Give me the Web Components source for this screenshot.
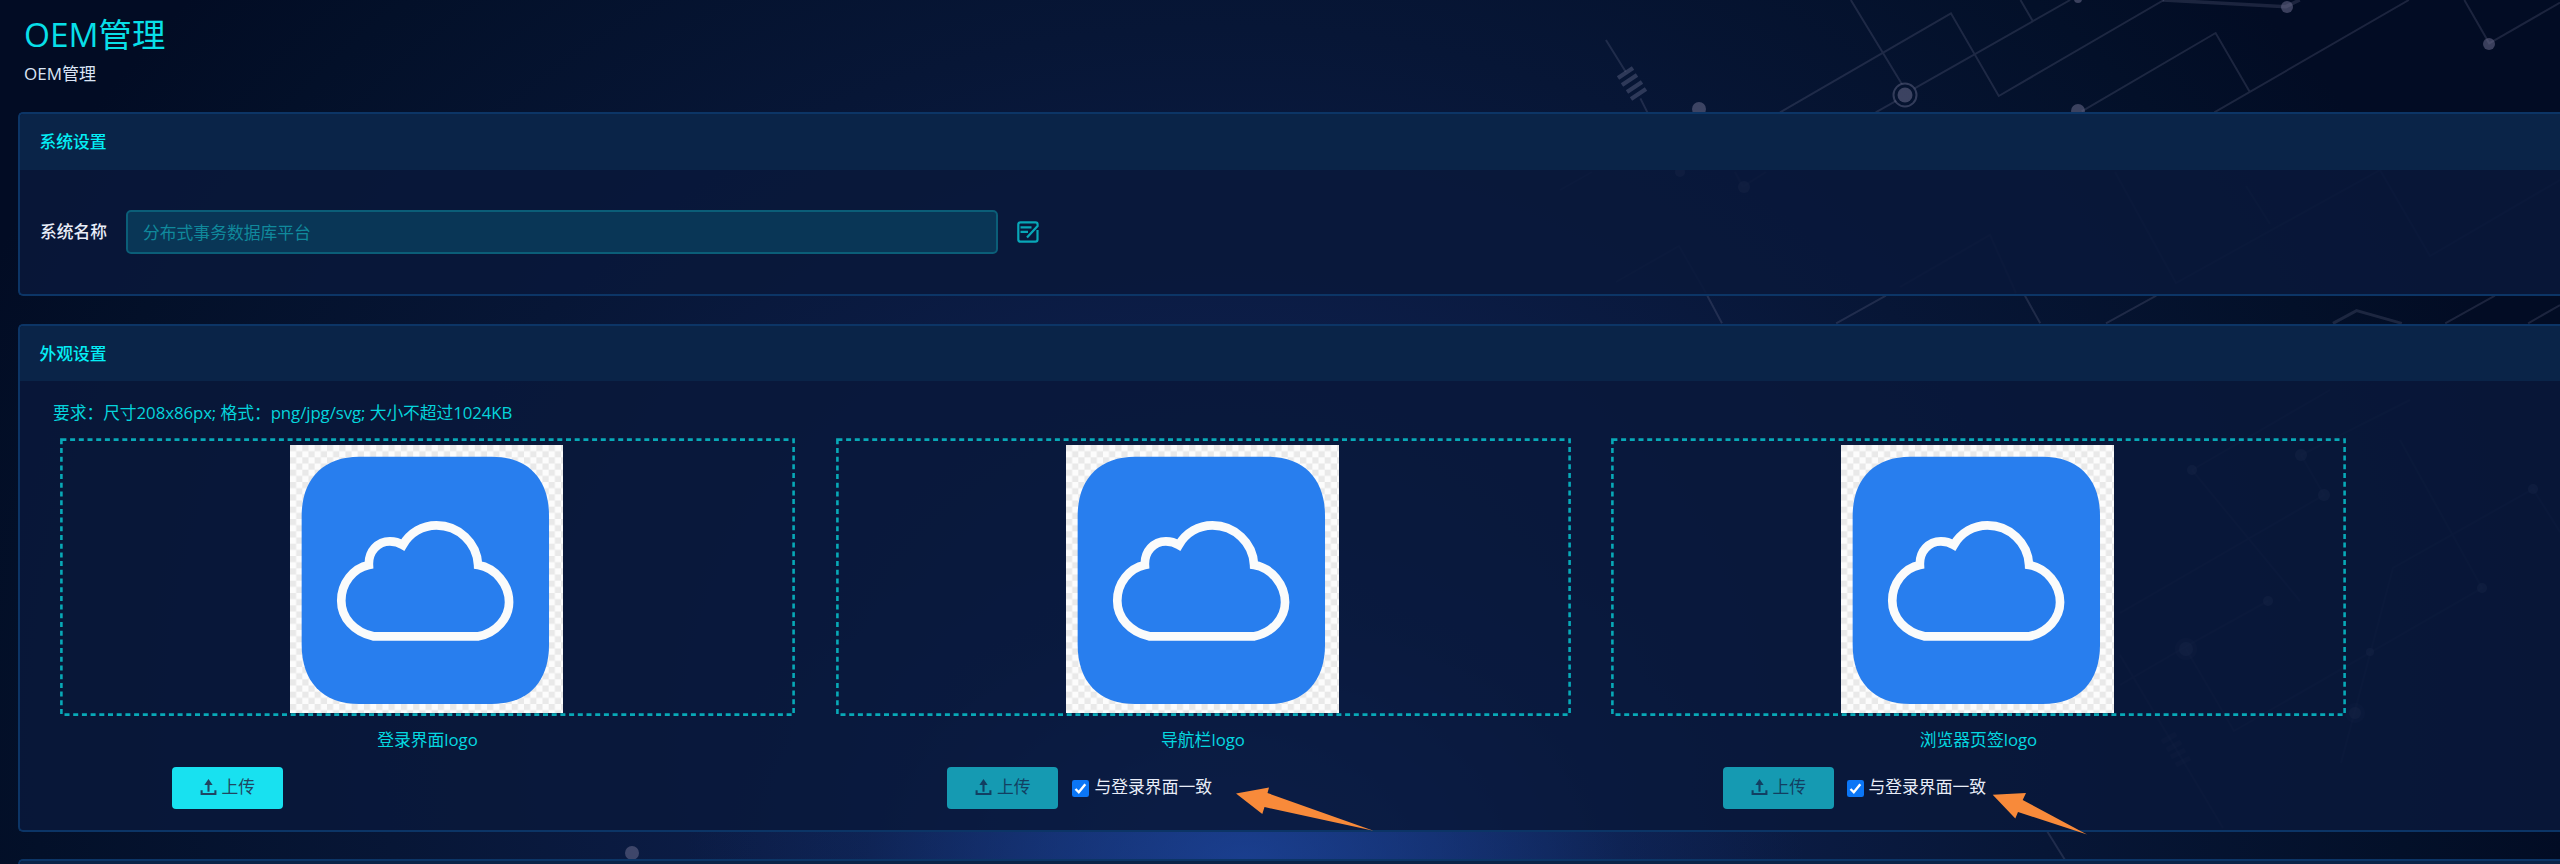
<!DOCTYPE html>
<html lang="zh-CN">
<head>
<meta charset="utf-8">
<title>OEM管理</title>
<style>
html,body{margin:0;height:100%;overflow:hidden;background:#020b22}
body{font-family:"Open Sans","Noto Sans CJK SC",sans-serif;font-size:16.8px;line-height:24px;color:#e8edf8}
</style>
</head>
<body>
<oem-page>
  <page-heading><span slot="title">OEM管理</span><span slot="crumb">OEM管理</span></page-heading>
  <settings-panel style="height:184px">
    <span slot="title">系统设置</span>
    <name-field label="系统名称" value="分布式事务数据库平台"></name-field>
  </settings-panel>
  <settings-panel style="height:508px">
    <span slot="title">外观设置</span>
    <logo-section>
      <span slot="hint">要求：尺寸208x86px; 格式：png/jpg/svg; 大小不超过1024KB</span>
      <logo-card>登录界面logo<upload-button slot="action">上传</upload-button></logo-card>
      <logo-card>导航栏logo<upload-button slot="action" disabled>上传</upload-button><check-option slot="action">与登录界面一致</check-option></logo-card>
      <logo-card>浏览器页签logo<upload-button slot="action" disabled>上传</upload-button><check-option slot="action" style="--gap:4.5px">与登录界面一致</check-option></logo-card>
    </logo-section>
  </settings-panel>
  <settings-panel style="height:184px"></settings-panel>
</oem-page>
<pointer-arrows></pointer-arrows>
<script>
const define = (name, html) => customElements.define(name, class extends HTMLElement {
  constructor() {
    super();
    const root = this.attachShadow({mode: 'open'});
    const t = document.createElement('template');
    t.innerHTML = html;
    root.append(t.content.cloneNode(true));
    root.querySelectorAll('[data-attr]').forEach(e => {
      const v = this.getAttribute(e.dataset.attr);
      if (e.tagName === 'INPUT') e.value = v; else e.textContent = v;
    });
  }
});

define('circuit-backdrop', `
<style>
:host{position:absolute;inset:0;z-index:0;background:
 radial-gradient(ellipse 560px 360px at 1245px 864px,rgba(32,76,172,.66) 0%,rgba(29,70,160,.46) 35%,rgba(22,56,130,.18) 68%,transparent 100%),
 radial-gradient(ellipse 1350px 1150px at 1220px 740px,#10275a 0%,#0c1d47 35%,#071636 62%,#031029 88%,#020c24 100%)}
svg{display:block;width:2560px;height:864px}
.l{fill:none;stroke:#8d8fae;stroke-opacity:.19;stroke-width:2}
.l *{vector-effect:non-scaling-stroke}
.d{fill:#6f7090;fill-opacity:.52}
.f{fill:#8d8fae;fill-opacity:.5}
</style>
<svg viewBox="0 0 2560 864">
 <g class="l" transform="translate(1560 0) scale(.63776 .33333)">
  <path d="M72 120L103 215M126 295L137 337"/>
  <path d="M456 0L536 252M345 337L613 40L688 288L947 0M556 265L800 0M495 337L527 303M722 0L741 62"/>
  <path d="M818 334L1028 99L1081 274M1026 337L1331 0M1418 0L1457 130L1568 8"/>
  <path style="stroke-width:3.5" d="M945 0L1138 20L1160 0"/>
  <path d="M231 887L254 970M511 887L433 970M729 887L753 970M935 887L856 970M1466 887L1388 970M1568 915L1518 970"/>
  <path style="stroke-width:3" d="M1212 970L1249 932L1320 970"/>
 </g>
 <path d="M58 78L73 68M62 85L77 75M67 92L82 82M71 99L86 89" transform="translate(1560 0)" fill="none" stroke="#8083a3" stroke-opacity=".33" stroke-width="4.2"/>
 <g class="d"><circle cx="1699" cy="109" r="7"/><circle cx="2078" cy="111" r="7"/><circle cx="2287" cy="7" r="6"/><circle cx="2489" cy="44" r="6"/><circle cx="2078" cy="-1" r="4"/><circle cx="1905" cy="95" r="7.5"/><circle cx="632" cy="853" r="7"/></g>
 <circle cx="1905" cy="95" r="11.5" fill="none" stroke="#777b9b" stroke-opacity=".4" stroke-width="2"/>
 <g class="l"><path d="M2047 831L2065 860"/></g>
 <g opacity=".7"><g class="l"><path d="M1592 172L1560 190M1735 172L1743 187M1744 186L1766 172M1616 282L1679 246L1706 293M1900 287L1990 235L2016 293M2115 172L2176 283L2380 170L2430 256L2560 180M2246 186L2270 224"/>
 <path d="M2120 613L2324 495L2301 455M2410 400L2301 455M2300 601L2192 470M2192 470L2330 390M2268 601L2192 643L2120 685M2186 649L2234 731L2482 588L2400 440M2341 763L2393 568L2533 489L2560 532M2120 655L2223 828"/>
 <path style="stroke-width:5" d="M2162 742L2176 734M2167 750L2181 742M2171 757L2185 750M2176 765L2190 758"/></g>
 <g class="f"><circle cx="1680" cy="172" r="5"/><circle cx="1744" cy="187" r="6"/><circle cx="2192" cy="470" r="5"/><circle cx="2301" cy="455" r="6"/><circle cx="2324" cy="495" r="6"/><circle cx="2268" cy="601" r="5"/><circle cx="2186" cy="649" r="7"/><circle cx="2186" cy="649" r="11" fill-opacity=".2"/><circle cx="2355" cy="713" r="6"/><circle cx="2355" cy="713" r="10" fill-opacity=".2"/><circle cx="2370" cy="652" r="4"/><circle cx="2482" cy="588" r="5"/><circle cx="2533" cy="489" r="5"/></g></g>
</svg>`);

define('oem-page', `
<style>
:host{display:block;position:relative;width:2560px;height:864px;overflow:hidden}
main{position:relative;z-index:1;box-sizing:border-box;padding:0 0 0 17.5px;display:flex;flex-direction:column;gap:27.5px}
</style>
<circuit-backdrop></circuit-backdrop><main><slot></slot></main>`);

define('page-heading', `
<style>
:host{display:flex;flex-direction:column;box-sizing:border-box;height:84.5px;padding:11px 0 0 6.5px}
h1{margin:0;font-size:33.4px;line-height:46px;font-weight:400;color:#08dfe8}
div{font-size:17px;line-height:24px;margin-top:5px;color:#dbe5f5}
</style><h1><slot name="title"></slot></h1><div><slot name="crumb"></slot></div>`);

define('settings-panel', `
<style>
:host{display:flex;flex-direction:column;box-sizing:border-box;flex:none;border:2px solid #0c3566;border-right:0;border-radius:5px 0 0 5px;background:rgba(9,24,59,.87);overflow:hidden}
header{flex:none;box-sizing:border-box;height:55.5px;padding:0 20px;line-height:55px;background:#0a2448;color:#04eef5;font-weight:500}
</style><header><slot name="title"></slot></header><slot></slot>`);

define('name-field', `
<style>
:host{display:flex;align-items:center;height:126px;padding-left:20.5px}
label{width:86px;font-weight:500}
input{box-sizing:border-box;width:872px;height:44px;padding:0 15px;border:2px solid #0b5e78;border-radius:5px;background:#093656;color:#10899c;font:inherit;outline:0}
svg{margin-left:19px;width:22px;height:22px}
</style>
<label data-attr="label"></label><input data-attr="value" readonly>
<svg viewBox="0 0 22 22" fill="none" stroke="#08a7b8" stroke-width="2.2"><path d="M20.5 9V18.5Q20.5 20.7 18.3 20.7H3.5Q1.3 20.7 1.3 18.5V3.5Q1.3 1.3 3.5 1.3H18.5Q20.6 1.3 20.6 3.5V5L10 16.5M3.5 6.3H14.5M3.5 10.8H11"/></svg>`);

define('logo-section', `
<style>
:host{display:block;padding:19px 0 0 33.5px}
.hint{color:#05d4dc;white-space:nowrap;line-height:26px;letter-spacing:-.065px}
.cards{display:flex;gap:40.5px;padding:11.5px 0 0 7px}
</style><div class="hint"><slot name="hint"></slot></div><div class="cards"><slot></slot></div>`);

define('cloud-logo', `
<style>:host{display:block;width:273px;height:268px}svg{display:block}</style>
<svg width="273" height="268" viewBox="62 43 820 804" preserveAspectRatio="none">
<defs><pattern id="c" x="62" y="43" width="37" height="37" patternUnits="userSpaceOnUse"><rect width="37" height="37" fill="#fcfcfc"/><path d="M0 0H18.5V18.5H0ZM18.5 18.5H37V37H18.5Z" fill="#e9e9e9"/></pattern></defs>
<rect x="62" y="43" width="820" height="804" fill="url(#c)"/>
<path d="M270 78H668C778 78 840 146 840 256V642C840 752 778 820 668 820H270C160 820 97 752 97 642V256C97 146 160 78 270 78Z" fill="#287eee"/>
<path d="M312 617C255 604 216 562 216 510C216 458 252 412 299 403C297 362 326 332 362 332C378 332 390 336 401 343C422 306 460 284 502 284C568 284 624 336 627 403C680 412 720 462 720 515C720 562 682 606 628 617Z" fill="none" stroke="#fafbfb" stroke-width="26"/>
</svg>`);

define('logo-card', `
<style>
:host{display:block;width:735px}
.frame{display:grid;width:735px;height:279px}
.frame>*{grid-area:1/1}
.frame svg{display:block}
cloud-logo{margin:7px 0 0 230px}
.name{color:#05d8e0;text-align:center;line-height:24px;margin-top:11px}
.actions{display:flex;align-items:center;padding-left:111.5px;margin-top:15px;height:42px}
</style>
<div class="frame"><svg width="735" height="279" fill="none" stroke="#08a9b7" stroke-width="2.6" stroke-dasharray="5 3.7"><rect x="1.4" y="1.6" width="732.2" height="275"/></svg><cloud-logo></cloud-logo></div>
<div class="name"><slot></slot></div><div class="actions"><slot name="action"></slot></div>`);

define('upload-button', `
<style>
:host{display:flex;align-items:center;box-sizing:border-box;width:111px;height:42px;padding:0 0 2px 28px;gap:5px;border-radius:4px;background:#18e1f0;color:#204662}
:host([disabled]){background:#159ab2;color:#123f62}
svg{width:17px;height:18px}
</style>
<svg viewBox="0 0 18 18" fill="none" stroke="currentColor" stroke-width="2.2"><path d="M9 14V5M1.7 12.5V16.4H16.3V12.5"/><path d="M9 .5L13.4 6.8H4.6Z" fill="currentColor" stroke="none"/></svg><span><slot></slot></span>`);

define('check-option', `
<style>
:host{display:flex;align-items:center;gap:var(--gap,6px);margin-left:13.5px;color:#e8edf8}
svg{width:17px;height:17px;margin-top:2px}
span{margin-top:-2px;white-space:nowrap}
</style>
<svg viewBox="0 0 17 17"><rect width="17" height="17" rx="2.3" fill="#0b76f6"/><path d="M3.5 9L6.8 12.3L13.3 4.2" fill="none" stroke="#fff" stroke-width="2.4"/></svg><span><slot></slot></span>`);

define('pointer-arrows', `
<style>:host{position:absolute;left:0;top:0;z-index:5;pointer-events:none}svg{display:block}</style>
<svg width="2560" height="864" fill="#f88a3a"><path d="M1236 793.5L1269 787.5L1267.5 793L1373.5 830.8L1264.5 807L1262.3 814Z"/><path d="M1992.7 794.7L2026 793L2022.7 800L2087 834.5L2018 812L2015.3 818.5Z"/></svg>`);
</script>
</body>
</html>
